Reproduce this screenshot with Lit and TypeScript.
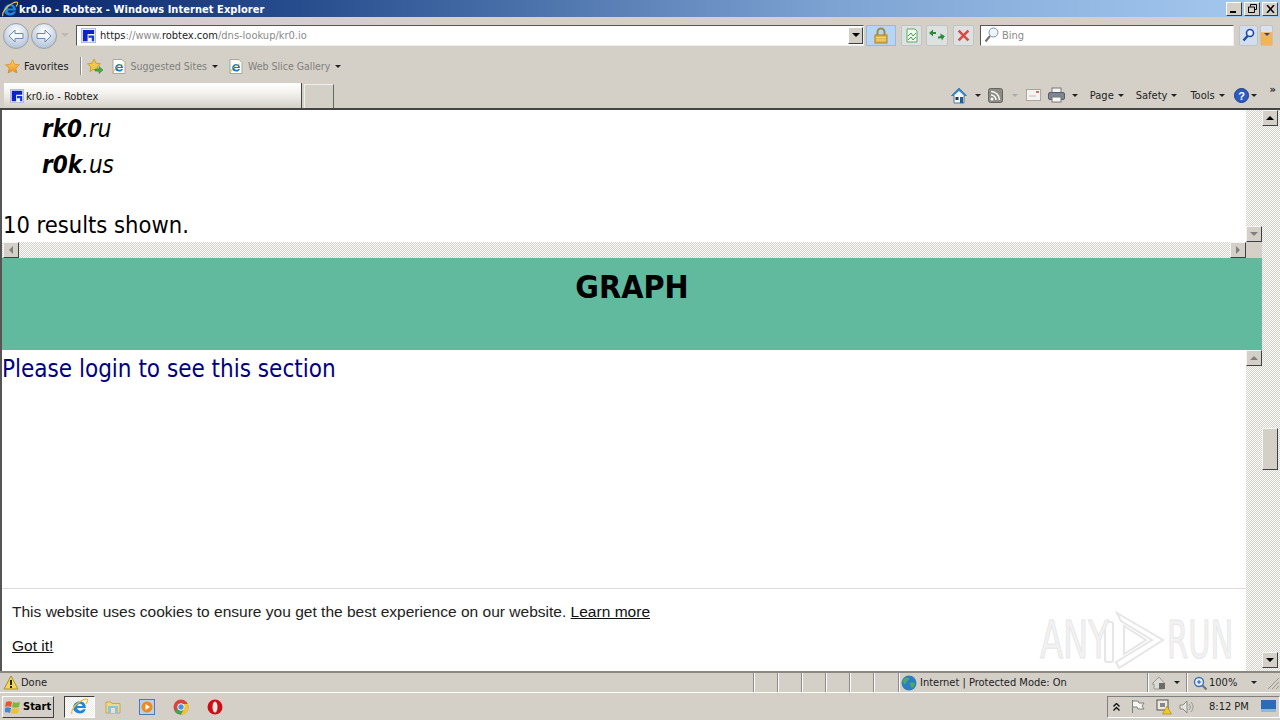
import { LitElement, html, css, svg } from "lit";
import { customElement } from "lit/decorators.js";

const ieIcon = (s = 16) => html`<svg width=${s} height=${s} viewBox="0 0 16 16"><path d="M2 9.500C2 5.500 5 3 8.300 3 11.500 3 14 5.500 14 9.500H5.800c.1 1.500 1.200 2.400 2.700 2.400 1.200 0 2.100-.5 2.700-1.400h2.800c-1 2.600-3 4-5.700 4C5 14.500 2 12.500 2 9.500zM5.900 7.500h5C10.800 6.200 9.800 5.300 8.400 5.300 7.100 5.300 6.100 6.200 5.900 7.500z" fill="#1f86da"/><path d="M1 15.200C-.4 13 3 5.500 11 2c2.500-1.200 4.400-1.200 4.700-.3.300 1-.6 2.500-1.700 3.800" fill="none" stroke="#efbe3a" stroke-width="1.200"/></svg>`;
const pageIe = () => html`<svg width="16" height="17" viewBox="0 0 16 17"><path d="M2 1.500h9l3 3v11H2z" fill="#fdfdf8" stroke="#a9a89c"/><path d="M4 10.500C4 7.800 6 6 8.300 6c2.200 0 3.700 1.600 3.700 4H6.500c0 1.200.9 1.800 2 1.800.8 0 1.400-.3 1.800-.9h1.700c-.6 1.700-2 2.600-3.600 2.600C6 13.500 4 12.500 4 10.500zM6.500 9h3.600c-.1-.9-.9-1.400-1.800-1.400-.9 0-1.600.5-1.800 1.400z" fill="#1c76c6"/><path d="M2.500 15c-.4-2 3-7 9-9" fill="none" stroke="#e0b040" stroke-width=".9"/></svg>`;
const favicon = (s = 16) => html`<svg width=${s} height=${s} viewBox="0 0 16 16"><rect x=".5" y=".5" width="15" height="15" fill="#eef2fb" stroke="#a9b8de"/><path d="M2 2h12v4.500H7V14H2z" fill="#0f22c8"/><path d="M8 8h6v6h-2.500v-3.500H8z" fill="#1438e0"/></svg>`;
const star = (s = 16) => html`<svg width=${s} height=${s} viewBox="0 0 16 16"><defs><linearGradient id="st" x1="0" y1="0" x2="0" y2="1"><stop offset="0" stop-color="#fbd768"/><stop offset="1" stop-color="#ee8f1e"/></linearGradient></defs><path d="M8 .8l2.200 4.800 5.200.6-3.800 3.500 1 5.200L8 12.300 3.400 14.900l1-5.200L.6 6.200l5.200-.6z" fill="url(#st)" stroke="#c98a1c" stroke-width=".7"/></svg>`;
const arrow = () => html`<i class="arrow"></i>`;

@customElement("app-root")
export class AppRoot extends LitElement {
  static styles = css`
    :host { display: flex; flex-direction: column; width: 1280px; height: 720px; overflow: hidden; background: #d4d0c8; font: 11px "DejaVu Sans Condensed", "Noto Sans", sans-serif; color: #222; }
    svg { display: block; flex: none; }
    .arrow { display: block; width: 0; height: 0; border: 3px solid transparent; border-top: 3px solid #222; border-bottom: 0; flex: none; }
    .title { height: 17px; display: flex; align-items: center; background: linear-gradient(90deg, #0a246a 0, #2a5090 25%, #7da3d3 65%, #a6caf0 100%); color: #fff; font: bold 11px "DejaVu Sans Condensed", "Liberation Sans", sans-serif; letter-spacing: .05px; padding-left: 2px; gap: 1px; }
    .title span { flex: 1; padding-top: 1px; }
    .winbtns { display: flex; gap: 2px; padding-right: 2px; }
    .wb { width: 16px; height: 14px; background: #d4d0c8; border: 1px solid; border-color: #fff #404040 #404040 #fff; box-sizing: border-box; display: flex; align-items: center; justify-content: center; }
    .addr { height: 37px; display: flex; align-items: center; padding-left: 3px; box-sizing: border-box; padding-bottom: 1px; }
    .nav { width: 26px; height: 26px; margin-top: 1px; border-radius: 50%; border: 1px solid #9aa0a8; box-sizing: border-box; background: radial-gradient(circle at 50% 30%, #fff, #cbd7e6 55%, #a3b6ce); display: flex; align-items: center; justify-content: center; margin-right: 2px; }
    .urlbox { width: 788px; height: 21px; margin-left: 7px; background: #fff; border: 1px solid; border-color: #555 #eee #eee #555; box-sizing: border-box; display: flex; align-items: center; padding-left: 4px; color: #8a8a8a; font-size: 11px; gap: 4px; }
    .urlbox b { font-weight: 400; color: #222; }
    .urlbox .u { flex: 1; white-space: nowrap; }
    .dd { width: 15px; height: 17px; background: #d4d0c8; border: 1px solid; border-color: #fff #404040 #404040 #fff; box-sizing: border-box; display: flex; align-items: center; justify-content: center; }
    .dd .arrow { border-width: 4px; border-bottom: 0; border-top-color: #000; }
    .lock { width: 30px; height: 21px; margin-left: 2px; background: #b9d5f5; border: 1px solid #9cb8d8; box-sizing: border-box; display: flex; align-items: center; justify-content: center; }
    .tb { width: 21px; height: 21px; border: 1px solid #c0c4c4; border-radius: 2px; box-sizing: border-box; background: #dde2e0; display: flex; align-items: center; justify-content: center; }
    .search { width: 254px; height: 21px; margin-left: 6px; background: #fff; border: 1px solid; border-color: #555 #eee #eee #555; box-sizing: border-box; display: flex; align-items: center; gap: 3px; padding-left: 3px; color: #8a8a8a; }
    .fav { height: 28px; display: flex; align-items: center; padding-left: 5px; box-sizing: border-box; padding-bottom: 4px; }
    .fav .item { display: flex; align-items: center; gap: 4px; }
    .muted { color: #80807c; font-size: 10.500px; }
    .sep { width: 1px; height: 18px; background: #888; border-right: 1px solid #fff; margin: 0 5px 0 11px; }
    .tabs { height: 28px; display: flex; border-bottom: 2px solid #444; box-sizing: border-box; align-items: flex-end; padding-left: 4px; }
    .tab { width: 298px; height: 25px; background: linear-gradient(#fff, #f4f2ee 40%, #d4d0c8); display: flex; align-items: center; gap: 2px; padding-left: 6px; box-sizing: border-box; border-right: 1px solid #444; }
    .tab span { padding-top: 1px; }
    .newtab { width: 30px; height: 24px; margin-left: 2px; border: 1px solid #666; border-left-color: #eee; border-top-color: #eee; border-bottom: 0; box-sizing: border-box; }
    .cmds { margin-left: auto; height: 26px; display: flex; align-items: center; padding-right: 4px; align-self: flex-start; }
    .cmd { display: flex; align-items: center; gap: 4px; }
    .body { flex: 1; display: flex; background: #fff; min-height: 0; }
    .main { flex: 1; display: flex; flex-direction: column; border-left: 2px solid #555; min-width: 0; }
    .frame1 { height: 148px; display: flex; flex-direction: column; flex: none; }
    .f1row { flex: 1; display: flex; min-height: 0; }
    .pane { flex: 1; color: #000; font: 24px "DejaVu Sans Condensed", sans-serif; min-width: 0; position: relative; }
    .domains { padding: 5px 0 0 40px; display: flex; flex-direction: column; gap: 8px; line-height: 28px; font-style: italic; }
    .domains b { font-weight: 700; }
    .shown { padding-left: 1px; margin-top: 32px; line-height: 28px; font-size: 23.500px; }
    .tex { background: repeating-conic-gradient(#d4d0c8 0 25%, #fff 0 50%) 0 0 / 2px 2px; }
    .vs { width: 16px; flex: none; display: flex; flex-direction: column; justify-content: flex-end; }
    .sb { width: 16px; height: 16px; background: #d4d0c8; border: 1px solid; border-color: #f4f4f4 #404040 #404040 #f4f4f4; box-sizing: border-box; display: flex; align-items: center; justify-content: center; flex: none; }
    .up { width: 0; height: 0; border: 4px solid transparent; border-bottom: 4px solid #808080; border-top: 0; }
    .down { width: 0; height: 0; border: 4px solid transparent; border-top: 4px solid #808080; border-bottom: 0; }
    .left { width: 0; height: 0; border: 4px solid transparent; border-right: 4px solid #808080; border-left: 0; }
    .right { width: 0; height: 0; border: 4px solid transparent; border-left: 4px solid #808080; border-right: 0; }
    .blk { border-bottom-color: #000; }
    .blkd { border-top-color: #000; }
    .hs { height: 16px; display: flex; justify-content: space-between; padding-left: 1px; flex: none; }
    .hsin { flex: 1; display: flex; justify-content: space-between; }
    .corner { width: 16px; background: #d4d0c8; }
    .band { height: 92px; flex: none; background: #61ba9e; color: #000; text-align: center; font: bold 32px/58px "DejaVu Sans Condensed", sans-serif; }
    .frame2 { flex: 1; display: flex; min-height: 0; position: relative; }
    .login { color: #000080; line-height: 36px; flex: 1; padding-top: 1px; }
    .frame2 .pane { display: flex; flex-direction: column; }
    .cookie { border-top: 1px solid #ddd; background: #fff; font: 15.540px/18px "Liberation Sans", sans-serif; color: #222; padding: 14px 10px 15px; height: 83px; box-sizing: border-box; display: flex; flex-direction: column; gap: 16px; }
    .cookie u { color: #111; }
    .mark { position: absolute; right: 29px; bottom: 0; display: flex; align-items: center; height: 62px; color: #f2f2f2; -webkit-text-stroke: 1px #e6e6e6; font: 52px/62px "DejaVu Sans Condensed", sans-serif; pointer-events: none; }
    .mk { display: block; transform-origin: left center; white-space: nowrap; }
    .any { width: 63px; transform: scaleX(.72); }
    .run { width: 66px; transform: scaleX(.65); }
    .outer { width: 18px; flex: none; display: flex; flex-direction: column; align-items: center; padding-right: 2px; box-sizing: border-box; position: relative; }
    .track { flex: 1; width: 100%; padding-top: 302px; box-sizing: border-box; display: flex; justify-content: center; }
    .thumb { width: 16px; height: 42px; background: #d4d0c8; border: 1px solid; border-color: #f4f4f4 #404040 #404040 #f4f4f4; box-sizing: border-box; }
    .status { height: 22px; display: flex; align-items: stretch; border-top: 2px solid #8a8880; border-bottom: 1px solid #fff; box-sizing: border-box; flex: none; }
    .sc { border-left: 1px solid #8e8c86; box-shadow: inset 1px 0 #fff; display: flex; align-items: center; gap: 4px; padding-left: 3px; box-sizing: border-box; }
    .task { height: 27px; display: flex; align-items: center; flex: none; padding-left: 2px; box-sizing: border-box; }
    .start { width: 52px; height: 22px; border: 1px solid; border-color: #fff #404040 #404040 #fff; box-sizing: border-box; display: flex; align-items: center; gap: 2px; padding-left: 2px; font: bold 11px "DejaVu Sans Condensed", sans-serif; color: #000; }
    .iebtn { width: 31px; height: 22px; margin-left: 10px; background: repeating-conic-gradient(#fff 0 25%, #ecebe7 0 50%) 0 0 / 2px 2px; border: 1px solid; border-color: #404040 #fff #fff #404040; box-sizing: border-box; display: flex; align-items: center; justify-content: center; }
    .ti { width: 34px; display: flex; justify-content: center; }
    .tray { margin-left: auto; width: 173px; height: 22px; border: 1px solid; border-color: #808080 #fff #fff #808080; box-sizing: border-box; display: flex; align-items: center; }
  `;

  render() {
    const logo = svg`
      <g fill="none" stroke="#e6e6e6" stroke-width="2">
        <rect x="2" y="13" width="8" height="40" rx="2"/>
        <path d="M14 4l46 27-44 28-3-6 36-22-31-19z"/>
        <path d="M21 17v28l22-14z"/>
      </g>`;
    return html`
      <div class="title">
        ${ieIcon(16)}<span>kr0.io - Robtex - Windows Internet Explorer</span>
        <div class="winbtns">
          <div class="wb"><svg width="8" height="8"><rect x="0" y="6" width="6" height="2" fill="#000"/></svg></div>
          <div class="wb"><svg width="9" height="9" fill="none" stroke="#000"><path d="M2.500 2.500V.5h6v5H6.500M.5 3h6v5.500h-6z"/></svg></div>
          <div class="wb"><svg width="9" height="8" stroke="#000" stroke-width="1.500"><path d="M1 0l7 8M8 0L1 8"/></svg></div>
        </div>
      </div>
      <div class="addr">
        <div class="nav"><svg width="16" height="14" viewBox="0 0 16 14"><path d="M1 7l6-6v3.500h8v5H7V13z" fill="#f4f6fa" stroke="#7088a6"/></svg></div>
        <div class="nav"><svg width="16" height="14" viewBox="0 0 16 14"><path d="M15 7L9 1v3.500H1v5h8V13z" fill="#f4f6fa" stroke="#7088a6"/></svg></div>
        <svg width="8" height="5" style="margin-left:2px"><path d="M0 0h8L4 4z" fill="#bdbab2"/></svg>
        <div class="urlbox">
          ${favicon(15)}
          <span class="u"><b>https</b>://www.<b>robtex.com</b>/dns-lookup/kr0.io</span>
          <div class="dd">${arrow()}</div>
        </div>
        <div class="lock"><svg width="16" height="17" viewBox="0 0 16 17"><path d="M4.500 8V5a3.500 3.500 0 017 0v3" fill="none" stroke="#a08a40" stroke-width="2"/><rect x="2" y="8" width="12" height="8" fill="#e3b63e" stroke="#a88527"/><path d="M3 10.500h10M3 13h10" stroke="#f3d77a"/></svg></div>
        <div class="tb" style="margin-left:5px"><svg width="14" height="15" viewBox="0 0 14 15"><path d="M2 1h8l2 2v11H2z" fill="#f2f8ee" stroke="#5da866"/><path d="M3 8l3-3 2 3 3-3M3 12l3-3 2 3 3-3" fill="none" stroke="#43a04e"/></svg></div>
        <div class="tb" style="margin-left:4px;width:22px"><svg width="16" height="14" viewBox="0 0 16 14"><path d="M7 4H4V1.500L0 5l4 3.500V6h3z" fill="#2c8a3c"/><path d="M9 10h3v2.500L16 9l-4-3.500V8H9z" fill="#2c8a3c" transform="rotate(-15 12 9)"/></svg></div>
        <div class="tb" style="margin-left:5px"><svg width="13" height="13" viewBox="0 0 12 12"><path d="M1.500 1.500l9 9M10.500 1.500l-9 9" stroke="#d84a4a" stroke-width="2.400"/></svg></div>
        <div class="search">
          <svg width="15" height="16" viewBox="0 0 15 16"><circle cx="9.500" cy="5.500" r="4.500" fill="#eef4fa" stroke="#7a94ac"/><path d="M6 9l-4.500 5.500" stroke="#70706c" stroke-width="2"/></svg>
          <span>Bing</span>
        </div>
        <div class="tb" style="margin-left:5px;width:19px;background:#d2deef"><svg width="13" height="14" viewBox="0 0 13 14"><circle cx="8" cy="5" r="3.500" fill="#e8f0fa" stroke="#1c4aa8" stroke-width="1.600"/><path d="M5.500 8L1.500 12.500" stroke="#1c4aa8" stroke-width="2.400"/></svg></div>
        <div class="tb" style="margin-left:2px;width:13px;background:linear-gradient(#dbe2ee 30%,#f2b457 35%)"><svg width="6" height="4"><path d="M0 0h6L3 3z" fill="#2b4a86"/></svg></div>
      </div>
      <div class="fav">
        <div class="item"><span>${star(15)}</span><span>Favorites</span></div>
        <div class="sep"></div>
        <svg width="17" height="16" viewBox="0 0 17 16"><path d="M7 1l2 4.300 4.600.5-3.400 3.100.9 4.600L7 11.200 2.900 13.500l.9-4.600L.4 5.800 5 5.300z" fill="#f2c84a" stroke="#b89122" stroke-width=".7"/><path d="M8 11h4V8.500l4 3.500-4 3.500V13H8z" fill="#4eaa3c" stroke="#2c7a24" stroke-width=".5"/></svg>
        <div class="item muted" style="margin-left:7px">${pageIe()}<span>Suggested Sites</span><span style="margin-left:1px">${arrow()}</span></div>
        <div class="item muted" style="margin-left:10px">${pageIe()}<span>Web Slice Gallery</span><span style="margin-left:1px">${arrow()}</span></div>
      </div>
      <div class="tabs">
        <div class="tab">${favicon(14)}<span>kr0.io - Robtex</span></div>
        <div class="newtab"></div>
        <div class="cmds">
          <svg width="16" height="17" viewBox="0 0 16 17"><path d="M8 1L.5 8.500H3V16h10V8.500h2.500z" fill="#f4f6f8" stroke="#4a7aa8"/><path d="M8 1L.5 8.500H3L8 4l5 4.500h2.500z" fill="#3f86c8"/><rect x="9" y="10" width="3" height="6" fill="#1f5e96"/><rect x="4.500" y="10" width="3" height="3" fill="#24384c"/></svg>
          <span style="margin-left:8px">${arrow()}</span>
          <svg style="margin-left:7px" width="15" height="15" viewBox="0 0 15 15"><rect x=".5" y=".5" width="14" height="14" rx="2" fill="#8e8c84" stroke="#66645e"/><circle cx="4" cy="11" r="1.500" fill="#fff"/><path d="M3 7a5 5 0 015 5M3 3.500A8.500 8.500 0 0111.500 12" fill="none" stroke="#fff" stroke-width="1.500"/></svg>
          <svg style="margin-left:9px" width="6" height="3"><path d="M0 0h6L3 3z" fill="#aaa"/></svg>
          <svg style="margin-left:8px" width="15" height="12" viewBox="0 0 15 12"><rect x=".5" y=".5" width="14" height="11" fill="#f4f3ef" stroke="#a8a69e"/><path d="M3 7h7" stroke="#c0beb6"/><rect x="10" y="2" width="3" height="2" fill="#d07070"/></svg>
          <svg style="margin-left:7px" width="17" height="16" viewBox="0 0 17 16"><rect x="4" y="1" width="9" height="5" fill="#f4f4f4" stroke="#77777a"/><rect x=".5" y="5.500" width="16" height="7" rx="1.500" fill="#7e8694" stroke="#565c68"/><rect x="4" y="10" width="9" height="5" fill="#f8f8f8" stroke="#77777a"/></svg>
          <span style="margin-left:7px">${arrow()}</span>
          <div class="cmd" style="margin-left:12px"><span>Page</span>${arrow()}</div>
          <div class="cmd" style="margin-left:12px"><span>Safety</span>${arrow()}</div>
          <div class="cmd" style="margin-left:13px"><span>Tools</span>${arrow()}</div>
          <svg style="margin-left:9px" width="15" height="15" viewBox="0 0 15 15"><circle cx="7.500" cy="7.500" r="7" fill="#2c5cc0" stroke="#1c3c8c"/><text x="7.500" y="11.500" font-size="11" font-weight="700" fill="#fff" text-anchor="middle" font-family="Liberation Sans">?</text></svg>
          <span style="margin-left:2px">${arrow()}</span>
          <span style="margin-left:13px;margin-top:-11px;font-weight:700;font-size:11px">»</span>
        </div>
      </div>
      <div class="body">
        <div class="main">
          <div class="frame1">
            <div class="f1row">
              <div class="pane">
                <div class="domains">
                  <div><b>rk0</b>.ru</div>
                  <div><b>r0k</b>.us</div>
                </div>
                <div class="shown">10 results shown.</div>
              </div>
              <div class="vs tex"><div class="sb"><div class="down"></div></div></div>
            </div>
            <div class="hs tex">
              <div class="hsin">
                <div class="sb"><div class="left"></div></div>
                <div class="sb"><div class="right"></div></div>
              </div>
              <div class="corner"></div>
            </div>
          </div>
          <div class="band">GRAPH</div>
          <div class="frame2">
            <div class="pane">
              <div class="login">Please login to see this section</div>
              <div class="cookie">
                <div>This website uses cookies to ensure you get the best experience on our website. <u>Learn more</u></div>
                <div><u>Got it!</u></div>
              </div>
            </div>
            <div class="vs tex" style="justify-content:flex-start"><div class="sb"><div class="up"></div></div></div>
            <div class="mark">
              <span class="mk any">ANY</span>
              <svg width="64" height="62" viewBox="0 0 64 62">${logo}</svg>
              <span class="mk run">RUN</span>
            </div>
          </div>
        </div>
        <div class="outer tex">
          <div class="sb"><div class="up blk"></div></div>
          <div class="track"><div class="thumb"></div></div>
          <div class="sb" style="margin-bottom:3px"><div class="down blkd"></div></div>
        </div>
      </div>
      <div class="status">
        <div class="sc" style="width:753px;border:0;box-shadow:none;padding-left:3px">
          <svg width="16" height="15" viewBox="0 0 16 15"><path d="M8 1l7 13H1z" fill="#f5d94c" stroke="#a89028"/><rect x="7" y="5" width="2" height="5" fill="#222"/><rect x="7" y="11" width="2" height="2" fill="#222"/></svg>
          <span style="margin-left:-2px">Done</span>
        </div>
        <div class="sc" style="width:24px"></div>
        <div class="sc" style="width:24px"></div>
        <div class="sc" style="width:24px"></div>
        <div class="sc" style="width:24px"></div>
        <div class="sc" style="width:24px"></div>
        <div class="sc" style="width:25px"></div>
        <div class="sc" style="width:249px;padding-left:2px;gap:3px">
          <svg width="16" height="16" viewBox="0 0 16 16"><circle cx="8" cy="8" r="7.500" fill="#2b7fc0"/><path d="M2 5c2-3 5-3 6-2s-1 3-2 3 0 3-2 3-2-2-2-4zM9 8c2-1 5 0 5 1s-2 4-3 4-2-3-2-5z" fill="#4ea868"/></svg>
          <span>Internet | Protected Mode: On</span>
        </div>
        <div class="sc" style="width:39px">
          <svg width="16" height="14" viewBox="0 0 16 14"><path d="M8 1L1 8h2v5h9V8h2z" fill="#dcdad4" stroke="#9a9a96"/><rect x="8" y="7" width="6" height="6" fill="#6c6c6a"/></svg>
          <span style="margin-left:3px">${arrow()}</span>
        </div>
        <div class="sc" style="flex:1;gap:2px;padding-left:6px">
          <svg width="14" height="14" viewBox="0 0 14 14"><circle cx="6" cy="6" r="4.500" fill="#e6f0fa" stroke="#3a70b8" stroke-width="1.400"/><path d="M4 6h4M6 4v4" stroke="#2a50a8"/><path d="M9.500 9.500l4 4" stroke="#707070" stroke-width="2"/></svg>
          <span>100%</span>
          <span style="margin-left:12px">${arrow()}</span>
          <svg style="margin-left:auto" width="14" height="14" viewBox="0 0 14 14"><path d="M13 2L2 13M13 6l-7 7M13 10l-3 3" stroke="#9a9892"/></svg>
        </div>
      </div>
      <div class="task">
        <div class="start">
          <svg width="16" height="15" viewBox="0 0 16 15"><path d="M1 3c2-1 4-1 6 0l-1 5c-2-1-4-1-6 0z" fill="#e8562a"/><path d="M8 3c2 1 4 1 7 0l-1 5c-3 1-5 1-7 0z" fill="#7cb83a"/><path d="M0 9c2-1 4-1 6 0l-1 5c-2-1-4-1-6 0z" fill="#3a8ad8"/><path d="M7 9c2 1 4 1 7 0l-1 5c-3 1-5 1-7 0z" fill="#f0c030"/></svg>
          <span>Start</span>
        </div>
        <div class="iebtn">${ieIcon(17)}</div>
        <div class="ti" style="margin-left:1px"><svg width="16" height="15" viewBox="0 0 16 15"><path d="M1 3h5l1 1.500h8V14H1z" fill="#efd88a" stroke="#c4a852"/><rect x="3" y="7" width="10" height="7" fill="#8cc4e0"/><rect x="6" y="9" width="4" height="5" fill="#e7e2cc"/></svg></div>
        <div class="ti"><svg width="16" height="16" viewBox="0 0 16 16"><rect x=".5" y=".5" width="15" height="15" fill="#b8d0ec" stroke="#4a7ab8"/><circle cx="8" cy="8" r="5.500" fill="#ef8a1c"/><path d="M6.500 5l4.500 3-4.500 3z" fill="#fff"/></svg></div>
        <div class="ti"><svg width="16" height="16" viewBox="0 0 16 16"><circle cx="8" cy="8" r="7.500" fill="#d9453a"/><path d="M8 8L1.500 12A7.500 7.500 0 008 15.500L12 8z" fill="#3aa654"/><path d="M8 8l4 0-4 7.500A7.500 7.500 0 0015 5H8z" fill="#f5c431"/><circle cx="8" cy="8" r="3.300" fill="#4a8fdc" stroke="#fff"/></svg></div>
        <div class="ti"><svg width="16" height="16" viewBox="0 0 16 16"><circle cx="8" cy="8" r="7.500" fill="#cc0f16"/><ellipse cx="8" cy="8" rx="2.500" ry="5.500" fill="#f7e6e6"/></svg></div>
        <div class="tray">
          <svg style="margin-left:5px" width="7" height="8" viewBox="0 0 7 8" fill="none" stroke="#111" stroke-width="1.400"><path d="M.5 3.500l3-3 3 3M.5 7.500l3-3 3 3"/></svg>
          <svg style="margin-left:11px" width="14" height="15" viewBox="0 0 14 15"><path d="M1.500 1v13M2 2h5l1 2h5l-2 3 2 3H7L6 8H2" fill="#f6f6f2" stroke="#7e7e7a"/></svg>
          <svg style="margin-left:11px" width="16" height="16" viewBox="0 0 16 16"><rect x="1" y="1" width="11" height="10" fill="#ece9e0" stroke="#55554e"/><rect x="4" y="4" width="5" height="4" fill="#888"/><path d="M11 7l4.500 8h-9z" fill="#f2c91e" stroke="#8a7012" stroke-width=".5"/></svg>
          <svg style="margin-left:7px" width="16" height="14" viewBox="0 0 16 14"><path d="M1 5h3l4-4v12L4 9H1z" fill="#e6e4dc" stroke="#8a8a86"/><path d="M10 4a4 4 0 010 6M12 2a7 7 0 010 10" fill="none" stroke="#9a9a96"/></svg>
          <span style="margin-left:14px;white-space:nowrap">8:12 PM</span>
          <svg style="margin-left:12px" width="15" height="14" viewBox="0 0 15 14"><rect width="15" height="11" fill="#2a6cb8"/><rect x="0" y="9" width="15" height="3" fill="#8cb8dc"/></svg>
        </div>
      </div>
    `;
  }
}
